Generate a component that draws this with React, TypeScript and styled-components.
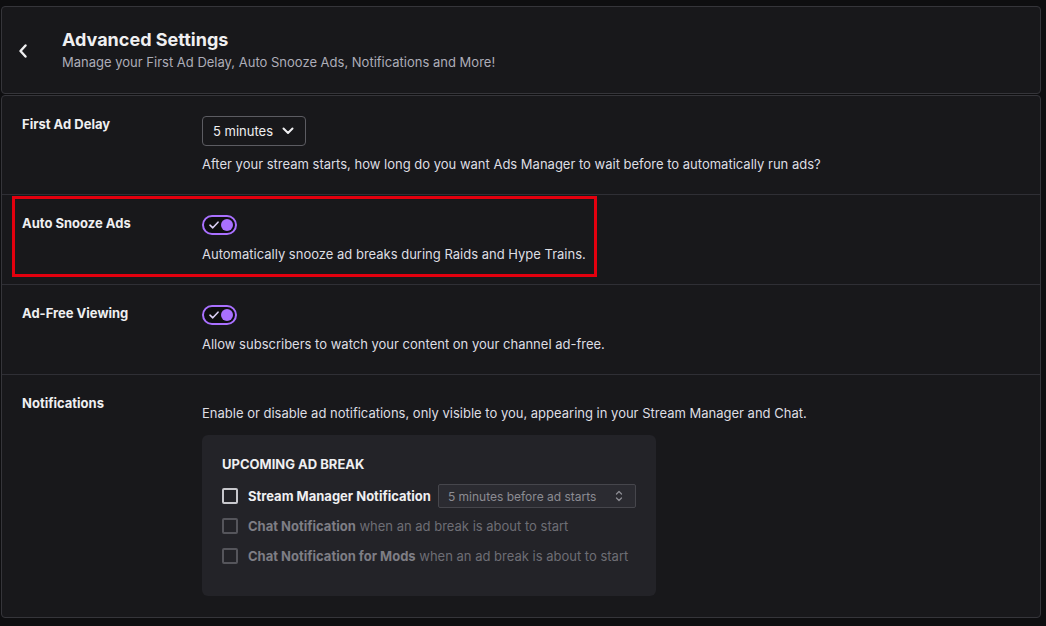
import React from 'react';
import styled, { createGlobalStyle } from 'styled-components';

const GlobalStyle = createGlobalStyle`
  html, body {
    margin: 0;
    background: #0e0e10;
  }
  body {
    font-family: Inter, 'Liberation Sans', sans-serif;
    color: #efeff1;
    -webkit-font-smoothing: antialiased;
  }
`;

const Page = styled.div`
  width: 1046px;
  height: 626px;
  box-sizing: border-box;
  padding: 6px 5px 8px 1px;
  display: flex;
  flex-direction: column;
  gap: 1px;
`;

const Card = styled.section`
  background: #18181b;
  border: 1px solid #35353a;
  border-radius: 4px;
  box-sizing: border-box;
`;

const HeaderCard = styled(Card)`
  height: 88px;
  flex-shrink: 0;
  display: flex;
  align-items: center;
`;

const BackButton = styled.button`
  width: 41px;
  height: 40px;
  display: flex;
  align-items: center;
  justify-content: center;
  background: none;
  border: none;
  padding: 0;
  color: #efeff1;
  margin-top: 1px;
`;

const HeaderText = styled.div`
  margin-left: 19px;
  display: flex;
  flex-direction: column;
  gap: 2px;
`;

const Title = styled.h1`
  margin: 0;
  font-size: 18px;
  line-height: 22px;
  font-weight: 700;
  color: #efeff1;
`;

const Subtitle = styled.p`
  margin: 0;
  font-size: 13px;
  line-height: 18px;
  color: #adadb8;
`;

const BodyCard = styled(Card)`
  flex: 1;
  min-height: 0;
  display: flex;
  flex-direction: column;
`;

const Row = styled.div<{ $last?: boolean }>`
  position: relative;
  display: grid;
  grid-template-columns: 180px 1fr;
  padding: 20px 20px 21px;
  border-bottom: ${({ $last }) => ($last ? 'none' : '1px solid #2f2f35')};
  flex: ${({ $last }) => ($last ? 1 : 'none')};
`;

const Label = styled.div`
  font-size: 13px;
  line-height: 20px;
  font-weight: 700;
  color: #efeff1;
  margin-top: -2px;
`;

const Content = styled.div<{ $offset?: number }>`
  display: flex;
  flex-direction: column;
  align-items: flex-start;
  padding-top: ${({ $offset }) => $offset ?? 0}px;
`;

const Description = styled.p<{ $gap?: number }>`
  margin: ${({ $gap }) => $gap ?? 10}px 0 0;
  font-size: 13px;
  line-height: 18px;
  color: #dedee3;
`;

const Dropdown = styled.button`
  height: 30px;
  display: flex;
  align-items: center;
  gap: 9px;
  padding: 0 11px 0 10px;
  background: transparent;
  border: 1px solid #5c5c62;
  border-radius: 4px;
  color: #efeff1;
  font-family: inherit;
  font-size: 13px;
`;

const Toggle = styled.div`
  width: 35px;
  height: 20px;
  box-sizing: border-box;
  border: 2px solid #a970ff;
  border-radius: 10px;
  background: #0e0e10;
  display: flex;
  align-items: center;
  justify-content: space-between;
  padding: 0 2px 0 5px;
`;

const Knob = styled.span`
  width: 12px;
  height: 12px;
  border-radius: 50%;
  background: #a970ff;
`;

const Highlight = styled.div`
  position: absolute;
  left: 10px;
  top: 1px;
  width: 585px;
  height: 81px;
  box-sizing: border-box;
  border: 3px solid #e3000e;
  pointer-events: none;
`;

const Panel = styled.div`
  margin-top: 13px;
  width: 454px;
  box-sizing: border-box;
  background: #232328;
  border-radius: 6px;
  padding: 20px 20px 28px;
`;

const PanelTitle = styled.h3`
  margin: 0 0 11px;
  font-size: 13px;
  line-height: 18px;
  font-weight: 700;
  color: #efeff1;
`;

const CheckList = styled.div`
  display: flex;
  flex-direction: column;
  gap: 6px;
`;

const CheckRow = styled.label`
  height: 24px;
  display: flex;
  align-items: center;
  gap: 10px;
  font-size: 13px;
  white-space: nowrap;
`;

const Checkbox = styled.span<{ $disabled?: boolean }>`
  width: 16px;
  height: 16px;
  box-sizing: border-box;
  border: 2px solid ${({ $disabled }) => ($disabled ? '#55555b' : '#c8c8cd')};
  border-radius: 2px;
  flex-shrink: 0;
`;

const CheckText = styled.span<{ $disabled?: boolean }>`
  color: ${({ $disabled }) => ($disabled ? '#6e6e75' : '#efeff1')};
  b {
    font-weight: 700;
    color: ${({ $disabled }) => ($disabled ? '#7e7e85' : '#efeff1')};
  }
`;

const Select = styled.div`
  flex-shrink: 0;
  margin-left: -3px;
  width: 198px;
  height: 24px;
  box-sizing: border-box;
  display: flex;
  align-items: center;
  justify-content: space-between;
  padding: 0 12px 0 9px;
  background: #2b2b31;
  border: 1px solid #46464c;
  border-radius: 2px;
  color: #8c8c93;
  font-size: 12px;
`;

const ChevronLeft = () => (
  <svg width="10" height="14" viewBox="0 0 10 14">
    <polyline points="7.5,1.5 2.5,7 7.5,12.5" fill="none" stroke="currentColor" strokeWidth="2.4" strokeLinecap="round" strokeLinejoin="round" />
  </svg>
);

const ChevronDown = () => (
  <svg width="12" height="8" viewBox="0 0 12 8">
    <polyline points="1.5,1.5 6,6 10.5,1.5" fill="none" stroke="#efeff1" strokeWidth="2" strokeLinecap="round" strokeLinejoin="round" />
  </svg>
);

const Check = () => (
  <svg width="10" height="8" viewBox="0 0 10 8">
    <polyline points="1,4.2 3.8,6.8 9,1.2" fill="none" stroke="#dcd0f5" strokeWidth="1.6" strokeLinecap="round" strokeLinejoin="round" />
  </svg>
);

const UpDown = () => (
  <svg width="8" height="12" viewBox="0 0 8 12">
    <polyline points="1.5,4 4,1.5 6.5,4" fill="none" stroke="#8c8c93" strokeWidth="1.3" strokeLinecap="round" strokeLinejoin="round" />
    <polyline points="1.5,8 4,10.5 6.5,8" fill="none" stroke="#8c8c93" strokeWidth="1.3" strokeLinecap="round" strokeLinejoin="round" />
  </svg>
);

const Switch = () => (
  <Toggle>
    <Check />
    <Knob />
  </Toggle>
);

const App: React.FC = () => (
  <>
    <GlobalStyle />
    <Page>
      <HeaderCard>
        <BackButton aria-label="Back">
          <ChevronLeft />
        </BackButton>
        <HeaderText>
          <Title>Advanced Settings</Title>
          <Subtitle>Manage your First Ad Delay, Auto Snooze Ads, Notifications and More!</Subtitle>
        </HeaderText>
      </HeaderCard>
      <BodyCard>
        <Row>
          <Label>First Ad Delay</Label>
          <Content>
            <Dropdown>
              5 minutes
              <ChevronDown />
            </Dropdown>
            <Description $gap={9}>
              After your stream starts, how long do you want Ads Manager to wait before to automatically run ads?
            </Description>
          </Content>
        </Row>
        <Row>
          <Highlight />
          <Label>Auto Snooze Ads</Label>
          <Content>
            <Switch />
            <Description>Automatically snooze ad breaks during Raids and Hype Trains.</Description>
          </Content>
        </Row>
        <Row>
          <Label>Ad-Free Viewing</Label>
          <Content>
            <Switch />
            <Description>Allow subscribers to watch your content on your channel ad-free.</Description>
          </Content>
        </Row>
        <Row $last>
          <Label>Notifications</Label>
          <Content $offset={9}>
            <Description $gap={0}>
              Enable or disable ad notifications, only visible to you, appearing in your Stream Manager and Chat.
            </Description>
            <Panel>
              <PanelTitle>UPCOMING AD BREAK</PanelTitle>
              <CheckList>
                <CheckRow>
                  <Checkbox />
                  <CheckText>
                    <b>Stream Manager Notification</b>
                  </CheckText>
                  <Select>
                    5 minutes before ad starts
                    <UpDown />
                  </Select>
                </CheckRow>
                <CheckRow>
                  <Checkbox $disabled />
                  <CheckText $disabled>
                    <b>Chat Notification</b> when an ad break is about to start
                  </CheckText>
                </CheckRow>
                <CheckRow>
                  <Checkbox $disabled />
                  <CheckText $disabled>
                    <b>Chat Notification for Mods</b> when an ad break is about to start
                  </CheckText>
                </CheckRow>
              </CheckList>
            </Panel>
          </Content>
        </Row>
      </BodyCard>
    </Page>
  </>
);

export default App;
